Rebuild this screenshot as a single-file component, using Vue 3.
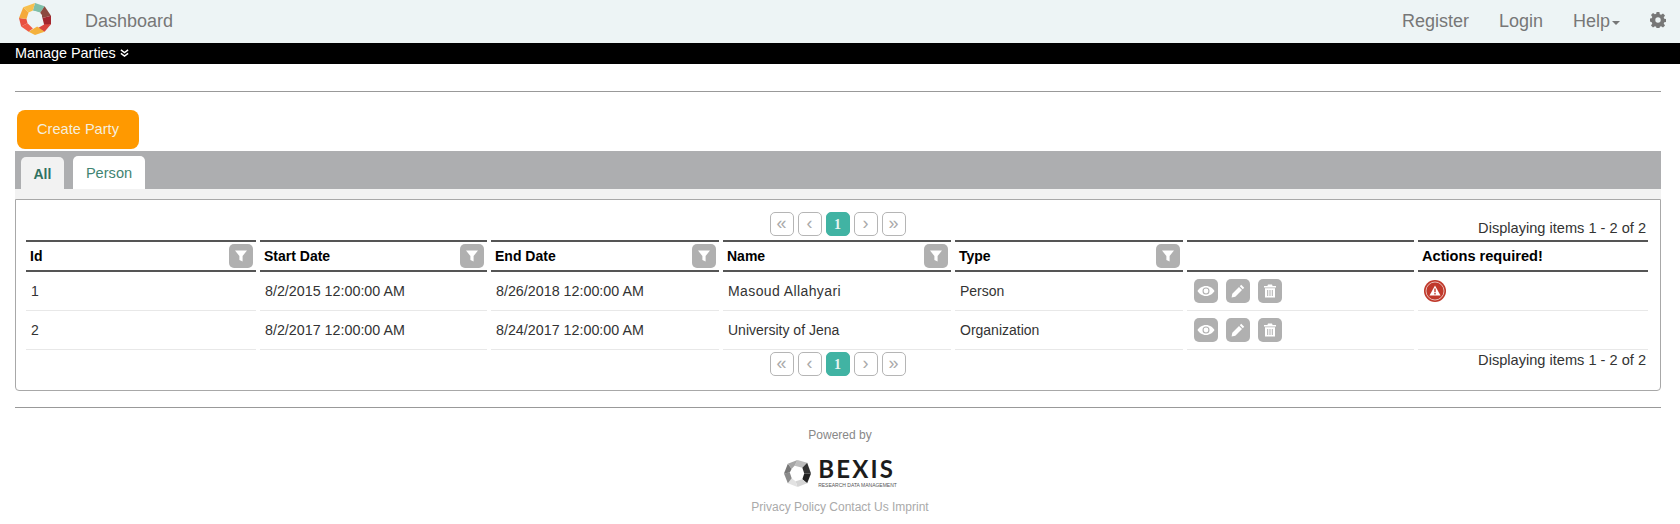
<template>
  <div class="page">
    <nav class="topbar">
      <svg class="logo" viewBox="0 0 30 30" width="32" height="32">
        <polygon points="15,0 24,3 20,9 13,7" fill="#7fbfa8" />
        <polygon points="24,3 30,12 22,14 20,9" fill="#8c4a3f" />
        <polygon points="30,12 30,20 24,22 22,14" fill="#a3262e" />
        <polygon points="30,20 24,27 17,24 24,20" fill="#d9463f" />
        <polygon points="24,27 15,30 9,27 17,22" fill="#f4b13d" />
        <polygon points="9,27 2,22 8,19 13,24" fill="#ef5b45" />
        <polygon points="2,22 0,14 7,15 8,19" fill="#e8503f" />
        <polygon points="0,14 4,4 9,9 7,15" fill="#f5a93a" />
        <polygon points="4,4 15,0 13,7 9,9" fill="#f7c04e" />
        <polygon points="15,7.500 21.500,11 21.500,19 15,22.500 8.500,19 8.500,11" fill="#edf4f5" />
      </svg>
      <a class="nav-link dash">Dashboard</a>
      <div class="nav-right">
        <a class="nav-link reg">Register</a>
        <a class="nav-link login">Login</a>
        <a class="nav-link help">Help<span class="caret"></span></a>
        <svg class="gear" viewBox="0 0 16 16" width="16" height="16">
          <path fill="#777" fill-rule="evenodd" d="M6.6 0h2.8l.4 2.2 1.3.6 1.9-1.3 2 2-1.3 1.9.6 1.3 2.2.4v2.8l-2.2.4-.6 1.3 1.3 1.9-2 2-1.9-1.3-1.3.6-.4 2.2H6.6l-.4-2.2-1.3-.6-1.9 1.3-2-2 1.3-1.9-.6-1.3L-.5 9.4V6.6l2.2-.4.6-1.3L1 3l2-2 1.9 1.3 1.3-.6zM8 5.3a2.7 2.7 0 1 0 0 5.4 2.7 2.7 0 0 0 0-5.4z" />
        </svg>
      </div>
    </nav>
    <div class="submenu">
      Manage Parties
      <svg viewBox="0 0 10 10" width="9" height="10">
        <path d="M1 1.5 5 4.5 9 1.5M1 5.5 5 8.5 9 5.5" fill="none" stroke="#fff" stroke-width="1.6" />
      </svg>
    </div>

    <main class="content">
      <hr class="rule top-rule" />
      <button class="create">Create Party</button>
      <div class="tabs">
        <a class="tab active">All</a>
        <a class="tab">Person</a>
      </div>
      <div class="strip"></div>

      <section class="grid-box">
        <div class="pager-row">
          <div class="pager">
            <span class="pg" v-for="p in pagerItems" :key="p.key" :class="{ on: p.on }">{{ p.label }}</span>
          </div>
          <span class="count">Displaying items 1 - 2 of 2</span>
        </div>

        <table class="grid">
          <colgroup>
            <col v-for="w in colWidths" :key="w.id" :style="{ width: w.size + 'px' }" />
          </colgroup>
          <thead>
            <tr>
              <th v-for="c in columns" :key="c.id">
                <div class="th-inner" :class="{ wide: !c.filter }">
                  <span>{{ c.label }}</span>
                  <span v-if="c.filter" class="ico-btn">
                    <svg viewBox="0 0 14 14" width="14" height="14"><path d="M1 1.5h12L8.6 7v5.5L5.4 11V7z" fill="#fff" /></svg>
                  </span>
                </div>
              </th>
            </tr>
          </thead>
          <tbody>
            <tr v-for="r in rows" :key="r.id">
              <td>{{ r.id }}</td>
              <td class="date">{{ r.start }}</td>
              <td class="date">{{ r.end }}</td>
              <td :class="{ stretch: r.alert }">{{ r.name }}</td>
              <td>{{ r.type }}</td>
              <td>
                <div class="acts">
                  <span class="ico-btn">
                    <svg viewBox="0 0 18 14" width="18" height="14">
                      <path fill="#fff" fill-rule="evenodd" d="M9 2C5 2 2 4.500.5 7 2 9.500 5 12 9 12s7-2.500 8.500-5C16 4.500 13 2 9 2zm0 1.500a3.500 3.500 0 1 1 0 7 3.500 3.500 0 0 1 0-7z" />
                      <circle cx="9" cy="7" r="2.400" fill="#fff" />
                    </svg>
                  </span>
                  <span class="ico-btn">
                    <svg viewBox="0 0 14 14" width="14" height="14">
                      <path fill="#fff" d="M10.200.8 13.200 3.800 11.800 5.200 8.800 2.200zM8 3 11 6 4.300 12.700.6 13.400 1.300 9.700z" />
                    </svg>
                  </span>
                  <span class="ico-btn">
                    <svg viewBox="0 0 14 14" width="14" height="14">
                      <path fill="#fff" fill-rule="evenodd" d="M5 .5h4l.6 1.500H13v1.400H1V2h3.400zM2 4.300h10V13.500H2zM4.200 6v6h1V6zm2.300 0v6h1V6zm2.300 0v6h1V6z" />
                    </svg>
                  </span>
                </div>
              </td>
              <td>
                <svg v-if="r.alert" class="alert" viewBox="0 0 22 22" width="22" height="22">
                  <circle cx="11" cy="11" r="11" fill="#c0392b" />
                  <circle cx="11" cy="11" r="9" fill="none" stroke="#f3d9d5" stroke-width="0.800" />
                  <path d="M11 5.500 16.500 15.500H5.500z" fill="#fff" />
                  <path d="M10.300 8.500h1.400v3.800h-1.400zM10.300 13h1.400v1.400h-1.400z" fill="#c0392b" />
                </svg>
              </td>
            </tr>
          </tbody>
        </table>

        <div class="pager-row bottom">
          <div class="pager">
            <span class="pg" v-for="p in pagerItems" :key="p.key" :class="{ on: p.on }">{{ p.label }}</span>
          </div>
          <span class="count">Displaying items 1 - 2 of 2</span>
        </div>
      </section>

      <hr class="rule foot-rule" />
    </main>

    <footer class="foot">
      <div class="powered">Powered by</div>
      <div class="bexis">
        <svg viewBox="0 0 30 30" width="29" height="29">
          <polygon points="15,1 25,4 20,9 12,7" fill="#bdbdbd" />
          <polygon points="25,4 29,15 22,15 20,9" fill="#333" />
          <polygon points="29,15 25,25 20,21 22,15" fill="#222" />
          <polygon points="25,25 15,29 13,23 20,21" fill="#d5d5d5" />
          <polygon points="15,29 5,25 9,20 13,23" fill="#e2e2e2" />
          <polygon points="5,25 1,15 7,14 9,20" fill="#8a8a8a" />
          <polygon points="1,15 5,5 9,10 7,14" fill="#777" />
          <polygon points="5,5 15,1 12,7 9,10" fill="#a5a5a5" />
        </svg>
        <div class="bexis-text">
          <span class="bexis-name">BEXIS</span>
          <span class="bexis-sub">RESEARCH DATA MANAGEMENT</span>
        </div>
      </div>
      <div class="links">Privacy Policy Contact Us Imprint</div>
    </footer>
  </div>
</template>

<script setup>
const pagerItems = [
  { key: 'first', label: '«' },
  { key: 'prev', label: '‹' },
  { key: 'p1', label: '1', on: true },
  { key: 'next', label: '›' },
  { key: 'last', label: '»' }
]

const colWidths = [
  { id: 'a', size: 230 },
  { id: 'b', size: 227 },
  { id: 'c', size: 228 },
  { id: 'd', size: 228 },
  { id: 'e', size: 228 },
  { id: 'f', size: 227 },
  { id: 'g', size: 230 }
]

const columns = [
  { id: 'id', label: 'Id', filter: true },
  { id: 'start', label: 'Start Date', filter: true },
  { id: 'end', label: 'End Date', filter: true },
  { id: 'name', label: 'Name', filter: true },
  { id: 'type', label: 'Type', filter: true },
  { id: 'acts', label: '' },
  { id: 'req', label: 'Actions required!' }
]

const rows = [
  { id: 1, start: '8/2/2015 12:00:00 AM', end: '8/26/2018 12:00:00 AM', name: 'Masoud Allahyari', type: 'Person', alert: true },
  { id: 2, start: '8/2/2017 12:00:00 AM', end: '8/24/2017 12:00:00 AM', name: 'University of Jena', type: 'Organization' }
]
</script>

<style>
body {
  margin: 0;
  background: #fff;
}
</style>

<style scoped>
.page {
  font-family: "Liberation Sans", Arial, sans-serif;
  font-size: 14px;
  color: #333;
  height: 524px;
  overflow: hidden;
}

.topbar {
  height: 43px;
  background: #edf4f5;
  display: flex;
  align-items: center;
  padding-left: 19px;
  padding-right: 14px;
}

.logo {
  margin-top: -6px;
}

.nav-link {
  font-size: 18px;
  color: #777;
}

.dash {
  margin-left: 34px;
}

.nav-right {
  margin-left: auto;
  display: flex;
  align-items: center;
}

.login {
  margin-left: 30px;
}

.help {
  margin-left: 30px;
  display: flex;
  align-items: center;
}

.caret {
  width: 0;
  height: 0;
  margin-left: 2px;
  margin-top: 2px;
  border-left: 4px solid transparent;
  border-right: 4px solid transparent;
  border-top: 4px solid #777;
}

.gear {
  margin-left: 30px;
  margin-top: -3px;
}

.submenu {
  height: 21px;
  line-height: 21px;
  background: #000;
  color: #fff;
  padding-left: 15px;
  font-size: 14.4px;
}

.content {
  padding: 0 19px 0 15px;
}

.rule {
  border: 0;
  border-top: 1px solid #999;
  margin: 0;
}

.top-rule {
  margin-top: 27px;
}

.create {
  display: block;
  margin: 18px 0 2px 2px;
  width: 122px;
  height: 39px;
  padding: 0 0 2px;
  border: 0;
  border-radius: 8px;
  background: #ff9900;
  color: #f5eedd;
  font-family: inherit;
  font-size: 14.6px;
}

.tabs {
  height: 38px;
  background: #adaeb0;
  display: flex;
  align-items: flex-end;
  padding-left: 6px;
  gap: 9px;
}

.tab {
  height: 33px;
  line-height: 34px;
  padding: 0 13px;
  background: #fff;
  border-radius: 5px 5px 0 0;
  color: #3f8472;
  font-size: 14.6px;
}

.tab.active {
  height: 32px;
  padding: 0 12.5px;
  background: #f2f2f2;
  font-size: 14px;
  font-weight: bold;
  color: #2f7160;
}

.strip {
  height: 10px;
  background: #f2f2f2;
}

.grid-box {
  box-sizing: border-box;
  height: 192px;
  border: 1px solid #a8a8a8;
  border-radius: 0 0 4px 4px;
  padding: 12px 8px 0 6px;
}

.pager-row {
  position: relative;
  height: 28px;
  display: flex;
  justify-content: center;
}

.pager-row.bottom {
  margin-top: 2px;
}

.pager {
  display: flex;
  gap: 4px;
  height: 24px;
  margin-left: 1px;
}

.pg {
  box-sizing: border-box;
  width: 24px;
  height: 24px;
  line-height: 20px;
  text-align: center;
  border: 1px solid #b5b5b5;
  border-radius: 5px;
  color: #aaa;
  font-size: 18px;
}

.pg.on {
  background: #41b3a3;
  border-color: #41b3a3;
  color: #e8f5f2;
  font-family: "Liberation Serif", serif;
  font-weight: bold;
  font-size: 14px;
  line-height: 23px;
}

.count {
  position: absolute;
  right: 6px;
  bottom: 4px;
  line-height: 16px;
  color: #333;
  font-size: 14.6px;
}

.pager-row.bottom .count {
  top: 0;
  bottom: auto;
}

.grid {
  border-collapse: separate;
  border-spacing: 4px 0;
  table-layout: fixed;
  width: 1630px;
}

th {
  height: 28px;
  padding: 0;
  border-top: 2px solid #555;
  border-bottom: 2px solid #555;
  text-align: left;
}

.th-inner {
  display: flex;
  align-items: center;
  justify-content: space-between;
  padding: 0 3px 0 4px;
  height: 28px;
  color: #000;
}

.th-inner.wide {
  font-size: 14.6px;
}

td {
  height: 38px;
  padding: 0 5px;
  border-bottom: 1px solid #e8e8e8;
  color: #333;
}

td.date {
  font-size: 14.3px;
}

td.stretch {
  letter-spacing: 0.4px;
}

.ico-btn {
  width: 24px;
  height: 24px;
  background: #b0b0b0;
  border-radius: 5px;
  display: flex;
  align-items: center;
  justify-content: center;
  flex: none;
}

.acts {
  display: flex;
  gap: 8px;
  padding-left: 2px;
}

.alert {
  display: block;
  margin-left: 1px;
}

.foot-rule {
  margin-top: 16px;
}

.foot {
  text-align: center;
  font-size: 12px;
  padding-top: 20px;
}

.powered {
  color: #888;
  line-height: 14px;
}

.bexis {
  display: flex;
  justify-content: center;
  align-items: center;
  gap: 6px;
  margin-top: 16px;
  height: 30px;
}

.bexis-text {
  display: flex;
  flex-direction: column;
  align-items: flex-start;
}

.bexis-name {
  font-family: Lato, sans-serif;
  font-weight: 700;
  font-size: 24px;
  line-height: 22px;
  letter-spacing: 2.2px;
  color: #1c1c1c;
}

.bexis-sub {
  font-size: 5px;
  line-height: 6px;
  margin-top: 2px;
  color: #555;
  white-space: nowrap;
}

.links {
  color: #aaa;
  margin-top: 12px;
}
</style>
